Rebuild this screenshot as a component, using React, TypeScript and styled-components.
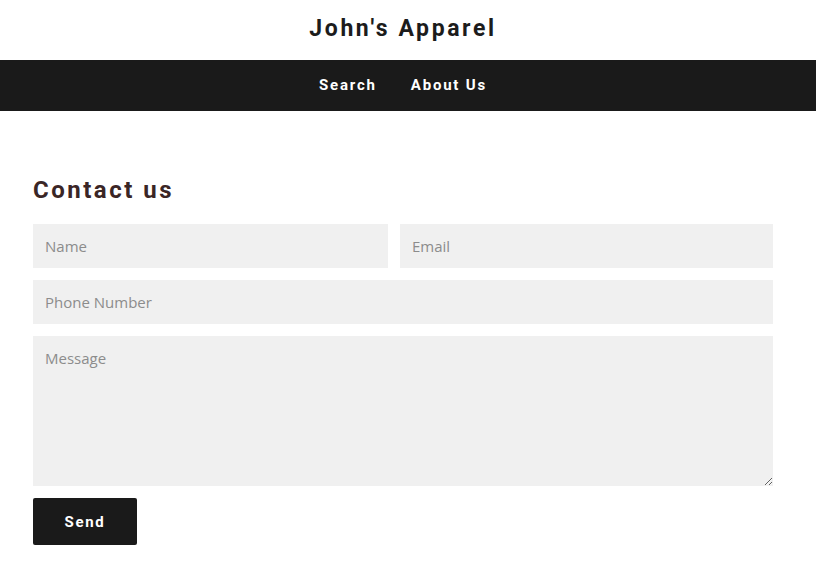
import React from "react";
import styled, { createGlobalStyle } from "styled-components";

const Global = createGlobalStyle`
  html, body { margin: 0; padding: 0; background: #fff; }
  * { box-sizing: border-box; }
`;

const Header = styled.header`
  height: 60px;
  display: flex;
  align-items: center;
  justify-content: center;
  padding-right: 10px;
`;

const Title = styled.h1`
  margin: 0 0 4px;
  font-family: "Roboto", sans-serif;
  font-weight: 700;
  font-size: 23px;
  letter-spacing: 2.6px;
  color: #1c1c1c;
`;

const Nav = styled.nav`
  height: 51px;
  background: #1a1a1a;
  display: flex;
  align-items: center;
  justify-content: center;
  gap: 34px;
  padding-right: 10px;
`;

const NavLink = styled.a`
  font-family: "Roboto", sans-serif;
  font-weight: 700;
  font-size: 15px;
  letter-spacing: 1.8px;
  color: #fff;
  text-decoration: none;
  margin-bottom: 2px;
`;

const Main = styled.main`
  width: 740px;
  margin-left: 33px;
  padding-top: 64px;
`;

const Heading = styled.h2`
  margin: 0 0 19px;
  font-family: "Roboto", sans-serif;
  font-weight: 700;
  font-size: 24px;
  letter-spacing: 2.5px;
  color: #3a2626;
  line-height: 30px;
`;

const Form = styled.form`
  display: grid;
  grid-template-columns: 355px 373px;
  column-gap: 12px;
  row-gap: 12px;
`;

const fieldStyles = `
  border: none;
  outline: none;
  background: #f0f0f0;
  font-family: "Open Sans", sans-serif;
  font-size: 15px;
  color: #333;
  padding: 0 12px;
  &::placeholder { color: #8c8c8c; }
`;

const Input = styled.input<{ $full?: boolean }>`
  ${fieldStyles}
  height: 44px;
  grid-column: ${(p) => (p.$full ? "1 / -1" : "auto")};
`;

const TextArea = styled.textarea`
  ${fieldStyles}
  grid-column: 1 / -1;
  height: 150px;
  padding-top: 12px;
  resize: vertical;
  display: block;
`;

const Button = styled.button`
  grid-column: 1 / 2;
  justify-self: start;
  width: 104px;
  height: 47px;
  border: none;
  border-radius: 2px;
  background: #1a1a1a;
  color: #fff;
  font-family: "Roboto", sans-serif;
  font-weight: 700;
  font-size: 15px;
  letter-spacing: 1.7px;
  cursor: pointer;
`;

export default function App() {
  return (
    <>
      <Global />
      <Header>
        <Title>John's Apparel</Title>
      </Header>
      <Nav>
        <NavLink href="#">Search</NavLink>
        <NavLink href="#">About Us</NavLink>
      </Nav>
      <Main>
        <Heading>Contact us</Heading>
        <Form onSubmit={(e) => e.preventDefault()}>
          <Input placeholder="Name" />
          <Input placeholder="Email" />
          <Input $full placeholder="Phone Number" />
          <TextArea placeholder="Message" />
          <Button type="submit">Send</Button>
        </Form>
      </Main>
    </>
  );
}
